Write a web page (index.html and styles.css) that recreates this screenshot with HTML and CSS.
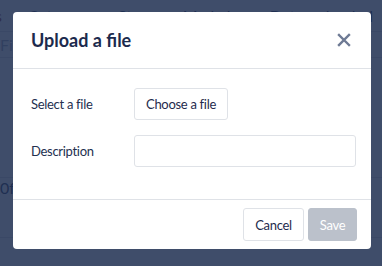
FILE: index.html
```html
<!DOCTYPE html>
<html>
<head>
<meta charset="utf-8">
<link rel="stylesheet" href="styles.css">
</head>
<body>
<div class="page">
  <div class="tabs">
    <span class="tab active">Files</span>
    <span class="tab">Category</span>
    <span class="tab">Stage</span>
    <span class="tab">Made by</span>
    <span class="tab">Date uploaded</span>
  </div>
  <div class="row-line">Filter by file</div>
  <div class="row-line tall"></div>
  <div class="row-line mid">0fc2.pdf</div>
</div>
<div class="overlay"></div>
<div class="modal">
  <div class="modal-header">
    <h1 class="title">Upload a file</h1>
    <button class="close" aria-label="Close">
      <svg width="14" height="14" viewBox="0 0 14 14"><path d="M2 2L12 12M12 2L2 12" stroke="#6e7a94" stroke-width="2.4" stroke-linecap="square"/></svg>
    </button>
  </div>
  <div class="modal-body">
    <div class="field">
      <label class="label">Select a file</label>
      <button class="btn">Choose a file</button>
    </div>
    <div class="field">
      <label class="label">Description</label>
      <input class="input" type="text">
    </div>
  </div>
  <div class="modal-footer">
    <button class="btn btn-cancel">Cancel</button>
    <button class="btn btn-save" disabled>Save</button>
  </div>
</div>
</body>
</html>
```
FILE: styles.css
```css
* { box-sizing: border-box; }
html, body { margin: 0; padding: 0; }
body {
  width: 382px;
  height: 266px;
  overflow: hidden;
  font-family: Lato, "Open Sans", sans-serif;
  background: #ffffff;
  position: relative;
}
.page {
  color: #1f2d52;
  font-size: 16px;
}
.tabs {
  display: flex;
  gap: 26px;
  height: 32px;
  margin-left: -30px;
  align-items: center;
  border-bottom: 1px solid #d8dce3;
  white-space: nowrap;
  overflow: hidden;
}
.tab.active { color: #8a2b1e; }
.row-line {
  height: 26px;
  border-bottom: 1px solid #d8dce3;
  color: #9aa3b4;
  line-height: 26px;
}
.row-line.tall { height: 120px; }
.row-line.mid { color: #1f2d52; height: 60px; line-height: 20px; }
.overlay {
  position: absolute;
  inset: 0;
  background: rgba(31, 48, 82, 0.86);
}
.modal {
  position: absolute;
  left: 13px;
  top: 12px;
  width: 358px;
  height: 237px;
  background: #ffffff;
  border-radius: 4px;
  display: flex;
  flex-direction: column;
  color: #1f2b4d;
}
.modal-header {
  height: 57px;
  display: flex;
  align-items: center;
  justify-content: space-between;
  padding: 0 20px 0 18px;
  border-bottom: 1px solid #dfe2e7;
}
.title {
  margin: 0;
  font-size: 18px;
  font-weight: 700;
  color: #1c2a4d;
}
.close {
  border: 0;
  background: none;
  padding: 0;
  width: 14px;
  height: 14px;
  display: flex;
  margin-top: -1px;
}
.modal-body {
  flex: 1;
  padding: 19px 15px 0 18px;
  display: flex;
  flex-direction: column;
  gap: 15px;
}
.field {
  display: flex;
  align-items: center;
}
.label {
  width: 103px;
  font-size: 13px;
  letter-spacing: -0.3px;
  color: #24304f;
}
.btn {
  font-family: Lato, "Open Sans", sans-serif;
  font-size: 13px;
  letter-spacing: -0.3px;
  color: #1f2b4d;
  background: #ffffff;
  border: 1px solid #dfe2e7;
  border-radius: 3px;
  height: 32px;
  padding: 0 11px;
}
.input {
  width: 222px;
  height: 32px;
  border: 1px solid #dfe2e7;
  border-radius: 3px;
  font-family: Lato, sans-serif;
}
.modal-footer {
  height: 50px;
  border-top: 1px solid #dfe2e7;
  display: flex;
  justify-content: flex-end;
  align-items: flex-start;
  gap: 4px;
  padding: 8px 14px 0 0;
}
.btn-cancel { height: 33px; width: 61px; padding: 0; }
.btn-save {
  height: 33px;
  width: 49px;
  padding: 0;
  background: #bbc1cb;
  border-color: #bbc1cb;
  color: #ffffff;
}
```
